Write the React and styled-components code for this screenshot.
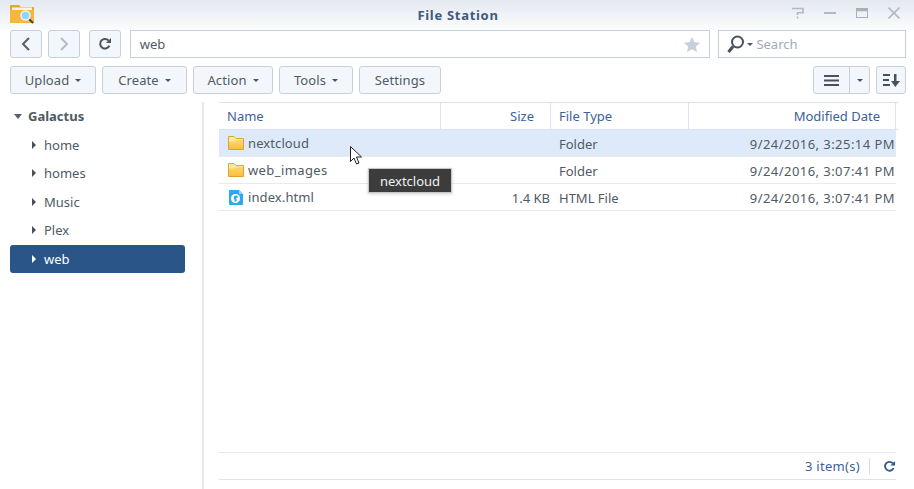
import React from "react";
import styled, { createGlobalStyle } from "styled-components";

const GlobalStyle = createGlobalStyle`
  html, body {
    margin: 0;
    padding: 0;
    background: #fff;
    overflow: hidden;
  }
  body {
    font-family: "Noto Sans", "DejaVu Sans", sans-serif;
    font-size: 13px;
    color: #505a64;
  }
`;

const Window = styled.div`
  position: relative;
  display: flex;
  flex-direction: column;
  width: 914px;
  height: 489px;
  overflow: hidden;
`;

const TitleBar = styled.div`
  position: relative;
  display: flex;
  align-items: center;
  justify-content: center;
  flex: none;
  height: 30px;
  background: linear-gradient(#e4e9f1, #fbfcfd);
`;

const Title = styled.div`
  font-size: 13px;
  font-weight: 700;
  letter-spacing: 0.7px;
  color: #3d5a80;
  margin-left: 2px;
`;

const AppIcon = styled.svg`
  position: absolute;
  left: 10px;
  top: 3px;
`;

const WindowButtons = styled.div`
  position: absolute;
  right: 14px;
  top: 6px;
  display: flex;
  gap: 20px;
  align-items: center;
`;

const ToolRow = styled.div`
  display: flex;
  align-items: center;
  flex: none;
  height: 28px;
  margin-top: ${(p) => p.$top || 0}px;
  padding: 0 8px 0 10px;
  gap: 6px;
`;

const Button = styled.div`
  box-sizing: border-box;
  display: flex;
  align-items: center;
  justify-content: center;
  gap: 6px;
  height: 28px;
  width: ${(p) => (p.$w ? `${p.$w}px` : "auto")};
  margin-left: ${(p) => p.$ml || 0}px;
  background: #f3f7fb;
  border: 1px solid #c6d0da;
  border-radius: 3px;
  color: #505a64;
  font-size: 13px;
  letter-spacing: 0.1px;
`;

const PathBox = styled.div`
  box-sizing: border-box;
  display: flex;
  align-items: center;
  justify-content: space-between;
  width: 582px;
  height: 28px;
  margin-left: 3px;
  padding: 0 9px;
  border: 1px solid #c6d0da;
  color: #505a64;
`;

const SearchBox = styled.div`
  box-sizing: border-box;
  display: flex;
  align-items: center;
  gap: 3px;
  width: 188px;
  height: 28px;
  margin-left: 2px;
  padding: 0 8px;
  border: 1px solid #c6d0da;
  color: #a3adb8;
`;

const Spacer = styled.div`
  flex: 1;
`;

const SplitButton = styled.div`
  box-sizing: border-box;
  display: flex;
  width: 57px;
  height: 28px;
  background: #f3f7fb;
  border: 1px solid #c6d0da;
  border-radius: 3px;
`;

const SplitPart = styled.div`
  display: flex;
  align-items: center;
  justify-content: center;
  flex: ${(p) => (p.$main ? 1 : "none")};
  width: ${(p) => (p.$main ? "auto" : "19px")};
  border-left: ${(p) => (p.$main ? "none" : "1px solid #c6d0da")};
`;

const Caret = styled.span`
  display: inline-block;
  width: 0;
  height: 0;
  border-left: 3px solid transparent;
  border-right: 3px solid transparent;
  border-top: 3px solid #4a5562;
`;

const Body = styled.div`
  display: flex;
  flex: 1;
  min-height: 0;
  margin-top: 8px;
`;

const Sidebar = styled.div`
  box-sizing: border-box;
  flex: none;
  width: 204px;
  padding: 0 17px 0 10px;
  border-right: 2px solid #e8e9eb;
`;

const RootNode = styled.div`
  display: flex;
  align-items: center;
  height: 28.7px;
  padding-left: 4px;
  gap: 6px;
  font-weight: 700;
  color: #505a64;
`;

const RootCaret = styled.span`
  width: 0;
  height: 0;
  border-left: 4px solid transparent;
  border-right: 4px solid transparent;
  border-top: 5px solid #56606b;
`;

const TreeNode = styled.div`
  display: flex;
  align-items: center;
  height: 28.5px;
  padding-left: 22px;
  gap: 8px;
  border-radius: 3px;
  background: ${(p) => (p.$active ? "#2a5588" : "transparent")};
  color: ${(p) => (p.$active ? "#fff" : "#505a64")};
`;

const NodeCaret = styled.span`
  width: 0;
  height: 0;
  border-top: 4px solid transparent;
  border-bottom: 4px solid transparent;
  border-left: 4px solid ${(p) => (p.$active ? "#fff" : "#47515c")};
`;

const Main = styled.div`
  display: flex;
  flex-direction: column;
  flex: 1;
  min-width: 0;
  padding: 0 18px 9px 15px;
`;

const Columns = "222px 110px 138px 207px";

const HeaderRow = styled.div`
  display: grid;
  grid-template-columns: ${Columns};
  flex: none;
  height: 26px;
  margin-right: -2px;
  border-top: 1px solid #dbe3ee;
  border-bottom: 1px solid #dbe3ee;
`;

const HeaderCell = styled.div`
  display: flex;
  align-items: center;
  justify-content: ${(p) => (p.$right ? "flex-end" : "flex-start")};
  padding: 0 ${(p) => p.$pr || 8}px 0 8px;
  border-right: 1px solid #dbe3ee;
  color: #3d6199;
`;

const Row = styled.div`
  display: grid;
  grid-template-columns: ${Columns};
  height: 26px;
  border-bottom: 1px solid #e6ebf0;
  background: ${(p) => (p.$selected ? "#deeafa" : "transparent")};
`;

const Cell = styled.div`
  display: flex;
  align-items: center;
  justify-content: ${(p) => (p.$right ? "flex-end" : "flex-start")};
  padding: 1px 1px 0 8px;
  white-space: nowrap;
  letter-spacing: ${(p) => p.$spacing || 0}px;
`;

const NameCell = styled.div`
  display: flex;
  align-items: center;
  gap: 4px;
  padding: 0 8px 1px 9px;
  white-space: nowrap;
  letter-spacing: ${(p) => p.$spacing || 0.1}px;
`;

const Grow = styled.div`
  flex: 1;
`;

const Footer = styled.div`
  display: flex;
  align-items: center;
  justify-content: flex-end;
  flex: none;
  height: 26px;
  border-top: 1px solid #e6ebf0;
  border-bottom: 1px solid #dbe3ee;
  color: #3d6199;
  letter-spacing: 0.3px;
`;

const FooterSep = styled.div`
  width: 1px;
  height: 16px;
  margin: 0 13px 0 9px;
  background: #d5dde6;
`;

const Tooltip = styled.div`
  position: absolute;
  left: 368px;
  top: 168px;
  display: flex;
  align-items: center;
  justify-content: center;
  width: 82px;
  height: 23px;
  background: #3c3c3c;
  border: 1px solid #c8c8c8;
  box-shadow: 0 1px 3px rgba(0, 0, 0, 0.2);
  color: #f2f2f2;
`;

const Cursor = styled.svg`
  position: absolute;
  left: 350px;
  top: 146px;
`;

const Folder = () => (
  <svg width="16" height="14" viewBox="0 0 16 14">
    <defs>
      <linearGradient id="folderBody" x1="0" y1="0" x2="0" y2="1">
        <stop offset="0" stopColor="#fcd870" />
        <stop offset="1" stopColor="#f9c03c" />
      </linearGradient>
    </defs>
    <path d="M.5 13.500V.5h5.500l2 2h7.500v11z" fill="#fbe7a8" stroke="#e0a32c" />
    <path d="M1 5.500h5l1.500-1.500H15v9H1z" fill="url(#folderBody)" />
  </svg>
);

const HtmlIcon = () => (
  <svg width="16" height="16" viewBox="0 0 16 16">
    <path d="M1 2a1 1 0 0 1 1-1h9l4 4v10a1 1 0 0 1-1 1H2a1 1 0 0 1-1-1z" fill="#2ea8f0" />
    <path d="M11 1l4 4h-4z" fill="#9ad6fa" />
    <circle cx="7.500" cy="9.500" r="4.500" fill="#fff" />
    <path d="M6 7c2-1 4-.5 4 1L8 9.500l1 2-2 1.500L6 9.500z" fill="#2ea8f0" />
  </svg>
);

const Refresh = ({ color = "#4a5562", size = 14 }) => (
  <svg width={size} height={size} viewBox="0 0 14 14" fill="none">
    <path d="M11.400 8.600A4.800 4.800 0 1 1 10.600 3.600" stroke={color} strokeWidth="2" />
    <path d="M13 1v5H8z" fill={color} />
  </svg>
);

const rows = [
  { name: "nextcloud", size: "", type: "Folder", date: "9/24/2016, 3:25:14 PM", selected: true },
  { name: "web_images", size: "", type: "Folder", date: "9/24/2016, 3:07:41 PM", spacing: 0.4 },
  { name: "index.html", size: "1.4 KB", type: "HTML File", date: "9/24/2016, 3:07:41 PM", html: true },
];

const shares = ["home", "homes", "Music", "Plex", "web"];

export default function App() {
  return (
    <Window>
      <GlobalStyle />
      <TitleBar>
        <AppIcon width="24" height="21" viewBox="0 0 24 21">
          <path d="M0 3a1 1 0 0 1 1-1h8l2 2h12a1 1 0 0 1 1 1v15H0z" fill="#e9a52e" />
          <path d="M2 4.500h20V7H2z" fill="#fdf6e3" />
          <path d="M0 7h24v12a1 1 0 0 1-1 1H1a1 1 0 0 1-1-1z" fill="#f6b73c" />
          <path d="M19 16l4 4" stroke="#34495e" strokeWidth="2" />
          <circle cx="15.500" cy="12.500" r="4.500" fill="#8ed6fb" stroke="#eef3f5" strokeWidth="1.500" />
        </AppIcon>
        <Title>File Station</Title>
        <WindowButtons>
          <svg width="12" height="14" viewBox="0 0 12 14" fill="none" stroke="#b2b8bf" strokeWidth="1.600">
            <path d="M0 2.500h11v4.200H5.500V9" />
            <path d="M5.500 10.500v2" />
          </svg>
          <svg width="12" height="14" viewBox="0 0 12 14" fill="none" stroke="#b2b8bf" strokeWidth="2">
            <path d="M0 7h12" />
          </svg>
          <svg width="12" height="14" viewBox="0 0 12 14" fill="none" stroke="#a9b0b8">
            <rect x=".5" y="2.500" width="11" height="9" strokeWidth="1" />
            <path d="M0 4h12" strokeWidth="2.500" />
          </svg>
          <svg width="12" height="14" viewBox="0 0 12 14" fill="none" stroke="#b2b8bf" strokeWidth="1.600">
            <path d="M.5 1.500l11 11M11.500 1.500l-11 11" />
          </svg>
        </WindowButtons>
      </TitleBar>

      <ToolRow>
        <Button $w={32}>
          <svg width="10" height="14" viewBox="0 0 10 14" fill="none" stroke="#56606b" strokeWidth="2">
            <path d="M8 1L2 7l6 6" />
          </svg>
        </Button>
        <Button $w={32}>
          <svg width="10" height="14" viewBox="0 0 10 14" fill="none" stroke="#b4bbc3" strokeWidth="2">
            <path d="M2 1l6 6-6 6" />
          </svg>
        </Button>
        <Button $w={32} $ml={3}>
          <Refresh />
        </Button>
        <PathBox>
          web
          <svg width="16" height="15" viewBox="0 0 16 15">
            <path d="M8 0l2.400 5 5.600.7-4.100 3.800 1 5.500L8 12.300 3.100 15l1-5.500L0 5.700 5.600 5z" fill="#c6d0da" />
          </svg>
        </PathBox>
        <SearchBox>
          <svg width="17" height="20" viewBox="0 0 17 20" fill="none" stroke="#47525e">
            <circle cx="10.500" cy="8" r="5.500" strokeWidth="2" />
            <path d="M6 12.500L1.500 18" strokeWidth="3" />
          </svg>
          <Caret />
          Search
        </SearchBox>
      </ToolRow>

      <ToolRow $top={8}>
        <Button $w={86}>
          Upload <Caret />
        </Button>
        <Button $w={85}>
          Create <Caret />
        </Button>
        <Button $w={80}>
          Action <Caret />
        </Button>
        <Button $w={74}>
          Tools <Caret />
        </Button>
        <Button $w={82}>Settings</Button>
        <Spacer />
        <SplitButton>
          <SplitPart $main>
            <svg width="15" height="11" viewBox="0 0 15 11" fill="#47525e">
              <path d="M0 0h15v2H0zM0 4.500h15v2H0zM0 9h15v2H0z" />
            </svg>
          </SplitPart>
          <SplitPart>
            <Caret />
          </SplitPart>
        </SplitButton>
        <Button $w={30}>
          <svg width="17" height="13" viewBox="0 0 17 13" fill="#47525e">
            <path d="M0 0h7v2H0zM0 5h6v2H0zM0 10h7v2H0zM11 0h2.500v7H17l-4.700 6L8 7h3z" />
          </svg>
        </Button>
      </ToolRow>

      <Body>
        <Sidebar>
          <RootNode>
            <RootCaret />
            Galactus
          </RootNode>
          {shares.map((s) => (
            <TreeNode key={s} $active={s === "web"}>
              <NodeCaret $active={s === "web"} />
              {s}
            </TreeNode>
          ))}
        </Sidebar>
        <Main>
          <HeaderRow>
            <HeaderCell>Name</HeaderCell>
            <HeaderCell $right $pr={16}>
              Size
            </HeaderCell>
            <HeaderCell>File Type</HeaderCell>
            <HeaderCell $right $pr={15}>
              Modified Date
            </HeaderCell>
          </HeaderRow>
          {rows.map((r) => (
            <Row key={r.name} $selected={r.selected}>
              <NameCell $spacing={r.spacing}>
                {r.html ? <HtmlIcon /> : <Folder />}
                {r.name}
              </NameCell>
              <Cell $right>{r.size}</Cell>
              <Cell>{r.type}</Cell>
              <Cell $right $spacing={0.45}>
                {r.date}
              </Cell>
            </Row>
          ))}
          <Grow />
          <Footer>
            3 item(s)
            <FooterSep />
            <Refresh color="#2f5b8c" size={13} />
          </Footer>
        </Main>
      </Body>

      <Tooltip>nextcloud</Tooltip>
      <Cursor width="13" height="19" viewBox="0 0 13 19">
        <path d="M.5.5v15l3.500-3.500 2.500 6 2.500-1-2.500-6h5z" fill="#fff" stroke="#222" />
      </Cursor>
    </Window>
  );
}
